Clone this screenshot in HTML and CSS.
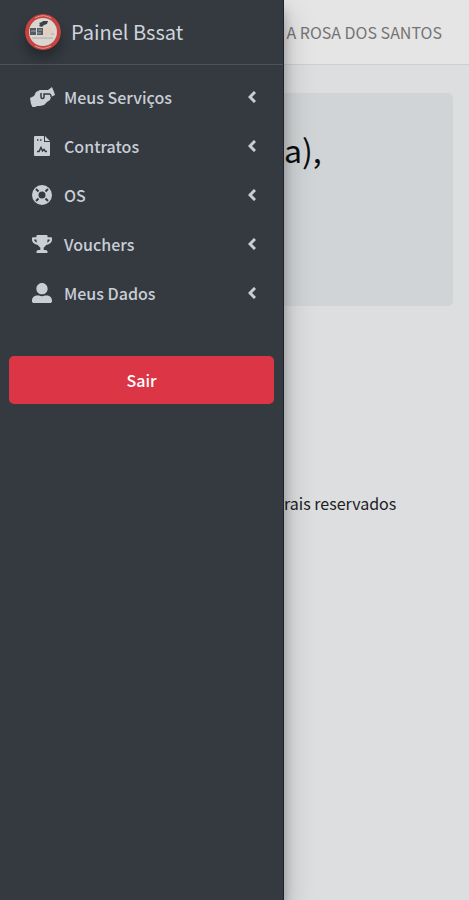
FILE: index.html
```html
<!DOCTYPE html>
<html lang="pt-BR">
<head>
    <title>Painel Bssat</title>
    <meta charset="utf-8">
    <meta name="viewport" content="width=device-width, initial-scale=1">
    <link rel="stylesheet" href="styles.css">
</head>

<body>
    <div class="wrapper">
        <aside class="sidebar">
            <a href="#" class="brand">
                <svg class="brand-logo" viewBox="0 0 36 36" aria-hidden="true">
                    <circle cx="18" cy="18" r="18" fill="#c9423f"/>
                    <path d="M10 4a16 16 0 0 1 16 0M10 32a16 16 0 0 0 16 0" fill="none" stroke="#dd9a94" stroke-width="1"/>
                    <circle cx="18" cy="18" r="14" fill="#d9d5d0"/>
                    <path d="M14 9l3-1 1-1h5l-1 3-3 1-2 2-3-1 1-2z" fill="#3c4144"/>
                    <path d="M19 15l6-2 4 7-9 2z" fill="#e5cdbb"/>
                    <path d="M5 14h6v7H5zM12 14h6v7h-6z" fill="#555b63"/>
                    <path d="M6 17h5M13 16h4M12 19h4" stroke="#a3a5a8" stroke-width="1"/>
                    <path d="M7 24h21M26 20h3" stroke="#a9aaac" stroke-width="1"/>
                </svg>
                <span>Painel Bssat</span>
            </a>
            <nav class="menu">
                <a href="#" class="menu-link">
                    <svg class="icon" viewBox="0 0 28 20">
                        <path d="M2 11l4-2 2-4 4-2h8l4-3 2 5 1 3-4 2-1 3-3 2-3 3-4 1H9l-4 2-2-4z" stroke-linejoin="round"/>
                        <path class="icon-line" d="M13 6v4c0 2 3 2 3 0V7h5c2 0 2 1 2 3"/>
                    </svg>
                    <span>Meus Serviços</span>
                    <svg class="arrow" viewBox="0 0 8 12"><path d="M7 1L2 6l5 5"/></svg>
                </a>
                <a href="#" class="menu-link">
                    <svg class="icon" viewBox="0 0 28 20">
                        <path d="M7 0h9v6h6v13a1 1 0 0 1-1 1H7a1 1 0 0 1-1-1V1a1 1 0 0 1 1-1zM17 0l5 5h-5z"/>
                        <path class="icon-line" d="M9 4h1.500M12 4h1.500M9 15.500h2l2-4 1.500 3.500 1.500-1.500 1.500 2H19"/>
                    </svg>
                    <span>Contratos</span>
                    <svg class="arrow" viewBox="0 0 8 12"><path d="M7 1L2 6l5 5"/></svg>
                </a>
                <a href="#" class="menu-link">
                    <svg class="icon" viewBox="0 0 20 20">
                        <path fill-rule="evenodd" d="M10 0a10 10 0 1 1 0 20a10 10 0 0 1 0-20zM10 6.500a3.500 3.500 0 1 0 0 7a3.500 3.500 0 0 0 0-7z"/>
                        <path class="icon-cut" d="M4 4l2.500 2.500M16 4l-2.500 2.500M4 16l2.500-2.500M16 16l-2.500-2.500"/>
                    </svg>
                    <span>OS</span>
                    <svg class="arrow" viewBox="0 0 8 12"><path d="M7 1L2 6l5 5"/></svg>
                </a>
                <a href="#" class="menu-link">
                    <svg class="icon" viewBox="-32 -32 640 576"><path d="M552 64H448V24c0-13.300-10.700-24-24-24H152c-13.300 0-24 10.700-24 24v40H24C10.700 64 0 74.700 0 88v56c0 35.700 22.500 72.400 61.900 100.700 31.500 22.700 69.800 37.100 110 41.700C203.300 338.500 240 360 240 360v72h-48c-35.300 0-64 20.700-64 56v12c0 6.600 5.400 12 12 12h296c6.600 0 12-5.400 12-12v-12c0-35.300-28.700-56-64-56h-48v-72s36.700-21.500 68.100-73.600c40.300-4.600 78.600-19 110-41.700 39.300-28.300 61.900-65 61.900-100.700V88c0-13.300-10.700-24-24-24zM99.300 192.800C74.900 175.200 64 155.600 64 144v-16h64.200c1 32.600 5.800 61.200 12.800 86.200-15.100-5.200-29.200-12.400-41.700-21.400zM512 144c0 16.100-17.700 36.100-35.300 48.800-12.500 9-26.700 16.200-41.800 21.400 7-25 11.800-53.600 12.800-86.200H512v16z"/></svg>
                    <span>Vouchers</span>
                    <svg class="arrow" viewBox="0 0 8 12"><path d="M7 1L2 6l5 5"/></svg>
                </a>
                <a href="#" class="menu-link">
                    <svg class="icon" viewBox="0 0 512 512"><path d="M256 288c79.500 0 144-64.500 144-144S335.500 0 256 0 112 64.500 112 144s64.500 144 144 144zm128 32h-55.100c-22.200 10.200-46.900 16-72.900 16s-50.600-5.800-72.900-16H128C57.300 320 0 377.300 0 448v16c0 26.500 21.500 48 48 48h416c26.500 0 48-21.500 48-48v-16c0-70.700-57.300-128-128-128z"/></svg>
                    <span>Meus Dados</span>
                    <svg class="arrow" viewBox="0 0 8 12"><path d="M7 1L2 6l5 5"/></svg>
                </a>
            </nav>
            <button type="button" class="btn-sair">Sair</button>
        </aside>

        <div class="page">
            <header class="topbar">A ROSA DOS SANTOS</header>
            <main class="content">
                <div class="welcome">
                    <h1>a),</h1>
                </div>
            </main>
            <footer class="footer">rais reservados</footer>
        </div>
    </div>
</body>

</html>
```

FILE: styles.css
```css
* {
    box-sizing: border-box;
}

body {
    margin: 0;
    background-color: #dcdee0;
    font-family: "Source Sans Pro", "Noto Sans CJK SC", sans-serif;
    font-size: 16px;
    line-height: 24px;
    color: #1d2023;
}

.wrapper {
    display: flex;
    min-height: 100vh;
}

/* sidebar */
.sidebar {
    position: relative;
    z-index: 1;
    flex: none;
    width: 284px;
    background-color: #343a40;
    border-right: 1px solid #1f252c;
    box-shadow: 0 14px 28px rgba(0, 0, 0, .25), 0 10px 10px rgba(0, 0, 0, .22);
}

.brand {
    display: flex;
    align-items: center;
    gap: 10px;
    height: 65px;
    padding: 0 25px;
    border-bottom: 1px solid #4b545c;
    color: #d0d4db;
    font-size: 20px;
    text-decoration: none;
}

.brand-logo {
    width: 36px;
    height: 36px;
    border-radius: 50%;
    box-shadow: 0 8px 12px rgba(0, 0, 0, .3);
}

.menu {
    display: flex;
    flex-direction: column;
    gap: 2px;
    padding: 8px 10px 0;
}

.menu-link {
    display: flex;
    align-items: center;
    gap: 8px;
    height: 47px;
    padding: 0 17px 0 18px;
    color: #c9ced6;
    font-size: 16px;
    font-weight: 500;
    text-decoration: none;
}

.icon {
    width: 28px;
    height: 20px;
    fill: #c9ced6;
}

.icon-cut {
    stroke: #343a40;
    stroke-width: 2;
}

.icon-line {
    fill: none;
    stroke: #343a40;
    stroke-width: 1.5;
}

.arrow {
    width: 8px;
    height: 12px;
    margin-left: auto;
    fill: none;
    stroke: #c9ced6;
    stroke-width: 3;
}

.btn-sair {
    display: block;
    width: calc(100% - 18px);
    height: 48px;
    margin: 40px 9px 0;
    border: 0;
    border-radius: 5px;
    background-color: #dc3545;
    color: #fff;
    font-family: inherit;
    font-size: 16px;
    font-weight: 500;
}

/* page */
.page {
    flex: 1;
    min-width: 0;
}

.topbar {
    height: 65px;
    padding: 20px 27px 0 0;
    border-bottom: 1px solid #cdd0d3;
    background-color: #e5e5e5;
    color: #747474;
    text-align: right;
    white-space: nowrap;
}

.content {
    padding: 28px 16px 0 0;
}

.welcome {
    height: 213px;
    padding-top: 34px;
    border-radius: 0 5px 5px 0;
    background-color: #d1d4d6;
}

.welcome h1 {
    margin: 0;
    color: #0c0d0e;
    font-size: 32px;
    font-weight: 400;
    line-height: 44px;
}

.footer {
    margin-top: 185px;
}
```
